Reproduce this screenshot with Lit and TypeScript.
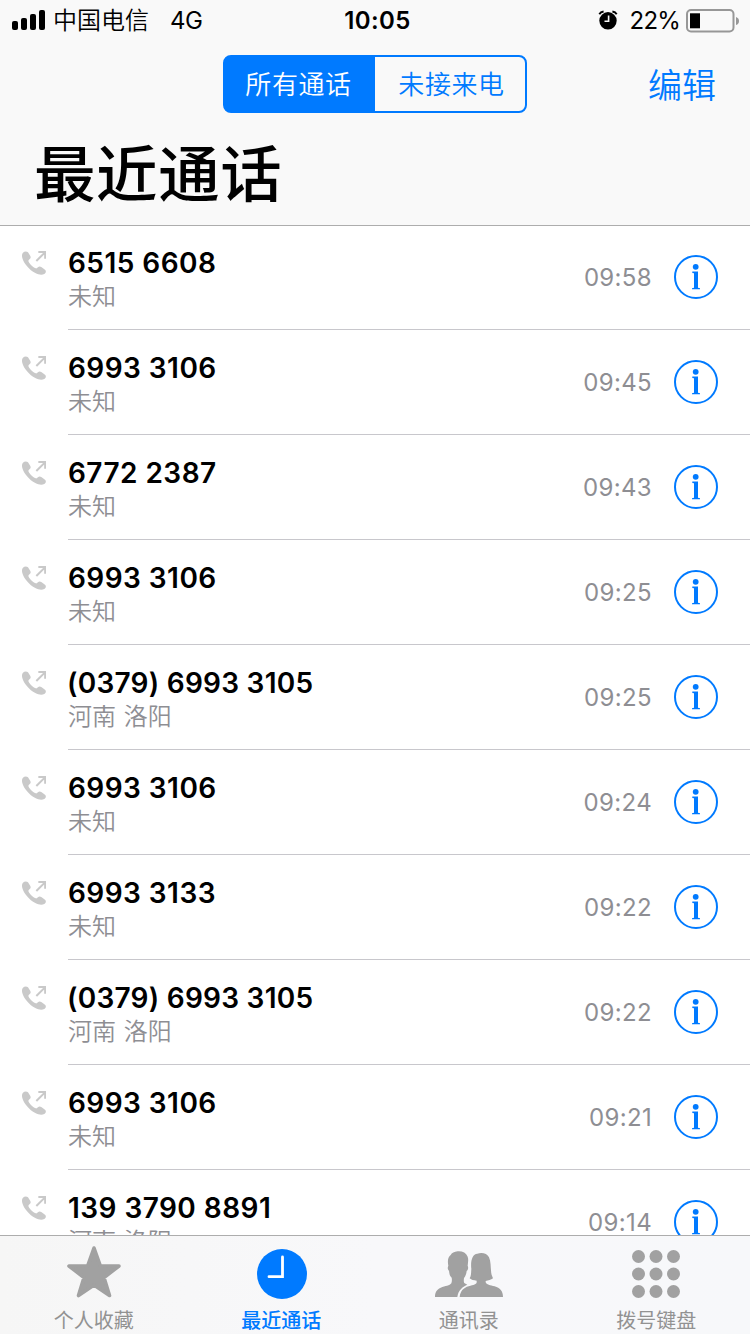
import { LitElement, html, css, svg } from "lit";
import { customElement, property } from "lit/decorators.js";
import { classMap } from "lit/directives/class-map.js";

interface Call {
  number: string;
  place: string;
  time: string;
}

const CALLS: Call[] = [
  { number: "6515 6608", place: "未知", time: "09:58" },
  { number: "6993 3106", place: "未知", time: "09:45" },
  { number: "6772 2387", place: "未知", time: "09:43" },
  { number: "6993 3106", place: "未知", time: "09:25" },
  { number: "(0379) 6993 3105", place: "河南 洛阳", time: "09:25" },
  { number: "6993 3106", place: "未知", time: "09:24" },
  { number: "6993 3133", place: "未知", time: "09:22" },
  { number: "(0379) 6993 3105", place: "河南 洛阳", time: "09:22" },
  { number: "6993 3106", place: "未知", time: "09:21" },
  { number: "139 3790 8891", place: "河南 洛阳", time: "09:14" },
];

@customElement("status-bar")
class StatusBar extends LitElement {
  static styles = css`
    :host {
      display: grid;
      grid-template-columns: 1fr auto 1fr;
      height: 41px;
      line-height: 41px;
      font-size: 24px;
      color: #000;
    }
    .side {
      display: flex;
      align-items: center;
    }
    .left {
      padding-left: 12px;
    }
    .bars {
      margin-top: -1px;
    }
    .right {
      justify-content: flex-end;
      padding-right: 10px;
    }
    .carrier {
      margin-left: 7px;
      font-weight: 350;
    }
    .net {
      margin-left: 21px;
      letter-spacing: -0.6px;
    }
    .clock {
      font-weight: 600;
      letter-spacing: 0.4px;
      padding-left: 5px;
    }
    .percent {
      margin: 0 6px 0 12px;
      letter-spacing: -0.8px;
    }
    .alarm {
      margin-top: -2px;
    }
    svg {
      display: block;
      flex: none;
    }
  `;
  render() {
    return html`
      <div class="side left">
        <svg class="bars" width="34" height="20" viewBox="0 0 34 20">
          <rect x="0" y="11" width="6" height="9" rx="2" />
          <rect x="9" y="8" width="6" height="12" rx="2" />
          <rect x="18" y="4" width="6" height="16" rx="2" />
          <rect x="27" y="0" width="6" height="20" rx="2" />
        </svg>
        <span class="carrier">中国电信</span><span class="net">4G</span>
      </div>
      <div class="clock">10:05</div>
      <div class="side right">
        <svg class="alarm" width="20" height="20" viewBox="0 0 20 20">
          <circle cx="10" cy="10.8" r="8.7" />
          <path d="M1.300 4.200Q2.500 2 5.600 1.500M18.700 4.200Q17.500 2 14.400 1.500" fill="none" stroke="#000" stroke-width="1.8" />
          <path d="M10.600 5.500V11.200H6.500" fill="none" stroke="#f9f9f9" stroke-width="1.600" />
        </svg>
        <span class="percent">22%</span>
        <svg width="54" height="24" viewBox="0 0 54 24">
          <rect x="1" y="1" width="46.5" height="21.5" rx="4" fill="none" stroke="#979797" stroke-width="2" />
          <rect x="4" y="4.300" width="10" height="15" />
          <path d="M50 8Q53 9 53 12T50 16Z" fill="#979797" />
        </svg>
      </div>
    `;
  }
}

@customElement("call-row")
class CallRow extends LitElement {
  @property({ attribute: false }) call!: Call;
  static styles = css`
    :host {
      display: flex;
      height: 105px;
      padding-left: 22px;
      box-sizing: border-box;
    }
    .out {
      flex: none;
      display: block;
      margin-top: 26px;
    }
    .body {
      flex: 1;
      margin-left: 22px;
      border-bottom: 1px solid #c8c7cc;
      display: flex;
      align-items: center;
      padding-right: 32px;
    }
    .who {
      flex: 1;
      align-self: flex-start;
      padding-top: 21px;
    }
    .number {
      font-size: 28px;
      line-height: 34px;
      font-weight: 600;
      letter-spacing: 0.45px;
      color: #000;
      white-space: pre;
    }
    .area {
      letter-spacing: 0.25px;
      margin-left: -1px;
    }
    .place {
      font-size: 24px;
      line-height: 34px;
      color: #8e8e93;
      font-weight: 350;
      word-spacing: 1px;
    }
    .time {
      font-size: 24px;
      letter-spacing: 0.35px;
      color: #8e8e93;
      margin-right: 22px;
      padding-top: 1px;
    }
    .info {
      display: block;
      flex: none;
    }
  `;
  render() {
    const { number, place, time } = this.call;
    return html`
      <svg class="out" width="24" height="24" viewBox="0 0 72 72">
        <path
          fill="#c9c9c9"
          d="M3 5C7 1 14 0 18 4L25 15C27 19 26 23 21 26L19 29C20 36 32 48 41 52C43 53 45 52 48 49C51 45 55 46 59 49L69 56C73 59 72 65 68 68C60 73 50 71 40 66C22 57 5 37 1 21C-1 14 0 8 3 5Z"
        />
        <path d="M43 30L69 4M49 3H69.500V23" fill="none" stroke="#c9c9c9" stroke-width="6" />
      </svg>
      <div class="body">
        <div class="who">
          <div class=${classMap({ number: true, area: number.startsWith("(") })}>${number}</div>
          <div class="place">${place}</div>
        </div>
        <div class="time">${time}</div>
        <svg class="info" width="44" height="44" viewBox="0 0 44 44" fill="#007aff">
          <circle cx="22" cy="22" r="21" fill="none" stroke="#007aff" stroke-width="2" />
          <circle cx="21.700" cy="11.800" r="2.900" />
          <path d="M18.300 16.600H24V32.800L26 33.200V34.300H18V33.200L20 32.800V18.200L18.300 17.900Z" />
        </svg>
      </div>
    `;
  }
}

const STAR = svg`<svg width="54" height="52" viewBox="0 0 54 52">
  <path d="M27 2L33.200 19.700L52 20L37 31.500L42.500 49.500L27 39L11.500 49.500L17 31.500L2 20L20.800 19.700Z"
    fill="#a1a1a1" stroke="#a1a1a1" stroke-width="3.600" stroke-linejoin="round"/></svg>`;
const CLOCK = svg`<svg width="50" height="50" viewBox="0 0 50 50">
  <circle cx="25" cy="25" r="25" fill="#007aff"/>
  <path d="M25.500 8V27.700H12" fill="none" stroke="#fff" stroke-width="2.800" stroke-linecap="round"/></svg>`;
const PEOPLE = svg`<svg width="68" height="46" viewBox="0 0 204 138" fill="#a1a1a1">
  <path d="M0 138C0 125 4 116 17 110C31 105 44 104 49 97C51 92 51 85 50 80C44 75 43 67 42 59C38 56 37 50 40 44C37 29 39 18 47 12C50 5 58 3 68 1C82 0 93 5 98 17C101 25 99 35 98 44C101 50 99 57 95 60C94 69 91 77 87 81C86 88 86 94 89 97L97 101C84 107 70 116 67 138Z"/>
  <path d="M74 138C76 120 86 110 101 106C116 102 125 100 125 94V89C116 88 109 87 104 82C109 75 108 64 109 54C106 30 112 9 127 8C140 3 157 7 162 19C169 33 166 57 170 72L174 82C168 87 160 89 152 90V94C154 101 166 103 179 106C195 111 204 120 204 138Z"/></svg>`;
const KEYPAD = svg`<svg width="48" height="48" viewBox="0 0 48 48" fill="#a1a1a1">
  ${[6.5, 24, 41.5].map((y) => [6.5, 24, 41.5].map((x) => svg`<circle cx=${x} cy=${y} r="6.500"/>`))}</svg>`;

@customElement("tab-bar")
class TabBar extends LitElement {
  static styles = css`
    :host {
      display: grid;
      grid-template-columns: repeat(4, 1fr);
      height: 99px;
      box-sizing: border-box;
      border-top: 1px solid #adadad;
      background: linear-gradient(90deg, #f6f6f6, #f8f8fa 50%, #f7f8fa);
    }
    .tab {
      display: flex;
      flex-direction: column;
      align-items: center;
      color: #929292;
    }
    .active {
      color: #007aff;
      font-weight: 500;
    }
    .icon {
      height: 70px;
      display: flex;
      align-items: center;
      padding-top: 6px;
      box-sizing: border-box;
    }
    .active .icon {
      padding-left: 1px;
    }
    .icon svg {
      display: block;
    }
    .star {
      padding-top: 2px;
    }
    .label {
      font-size: 20px;
      line-height: 30px;
    }
  `;
  render() {
    return html`
      <div class="tab"><div class="icon star">${STAR}</div><div class="label">个人收藏</div></div>
      <div class="tab active"><div class="icon">${CLOCK}</div><div class="label">最近通话</div></div>
      <div class="tab"><div class="icon">${PEOPLE}</div><div class="label">通讯录</div></div>
      <div class="tab"><div class="icon">${KEYPAD}</div><div class="label">拨号键盘</div></div>
    `;
  }
}

@customElement("app-root")
class AppRoot extends LitElement {
  static styles = css`
    :host {
      display: flex;
      flex-direction: column;
      height: 1334px;
      overflow: hidden;
      background: #fff;
      font-family: Inter, "Noto Sans CJK SC", sans-serif;
    }
    .header {
      position: relative;
      flex: none;
      height: 225px;
      background: #f9f9f9;
      box-shadow: 0 1px 0 #adadad;
    }
    .nav {
      display: grid;
      grid-template-columns: 1fr 304px 1fr;
      padding-top: 14px;
      align-items: center;
    }
    .segments {
      grid-column: 2;
      height: 58px;
      box-sizing: border-box;
      display: grid;
      grid-template-columns: 1fr 1fr;
      border: 2px solid #007aff;
      border-radius: 8px;
      background: linear-gradient(90deg, #007aff 50%, transparent 50%);
      font-size: 26px;
      letter-spacing: 0.6px;
      line-height: 56px;
      text-align: center;
      color: #007aff;
      font-weight: 350;
    }
    .on {
      color: #fff;
      padding-right: 3px;
    }
    .off {
      padding-left: 3px;
    }
    .edit {
      justify-self: end;
      margin-right: 34px;
      font-size: 34px;
      line-height: 58px;
      padding-top: 2px;
      margin-bottom: -2px;
      color: #007aff;
      font-weight: 350;
    }
    .title {
      margin: 14px 0 0 34px;
      font-size: 61.5px;
      letter-spacing: 0.6px;
      line-height: 96px;
      font-weight: 500;
      color: #000;
    }
    .list {
      flex: 1;
      min-height: 0;
      overflow: hidden;
    }
    .tabs {
      flex: none;
    }
  `;
  render() {
    return html`
      <div class="header">
        <status-bar></status-bar>
        <div class="nav">
          <div class="segments"><div class="on">所有通话</div><div class="off">未接来电</div></div>
          <div class="edit">编辑</div>
        </div>
        <div class="title">最近通话</div>
      </div>
      <div class="list">${CALLS.map((c) => html`<call-row .call=${c}></call-row>`)}</div>
      <tab-bar class="tabs"></tab-bar>
    `;
  }
}
